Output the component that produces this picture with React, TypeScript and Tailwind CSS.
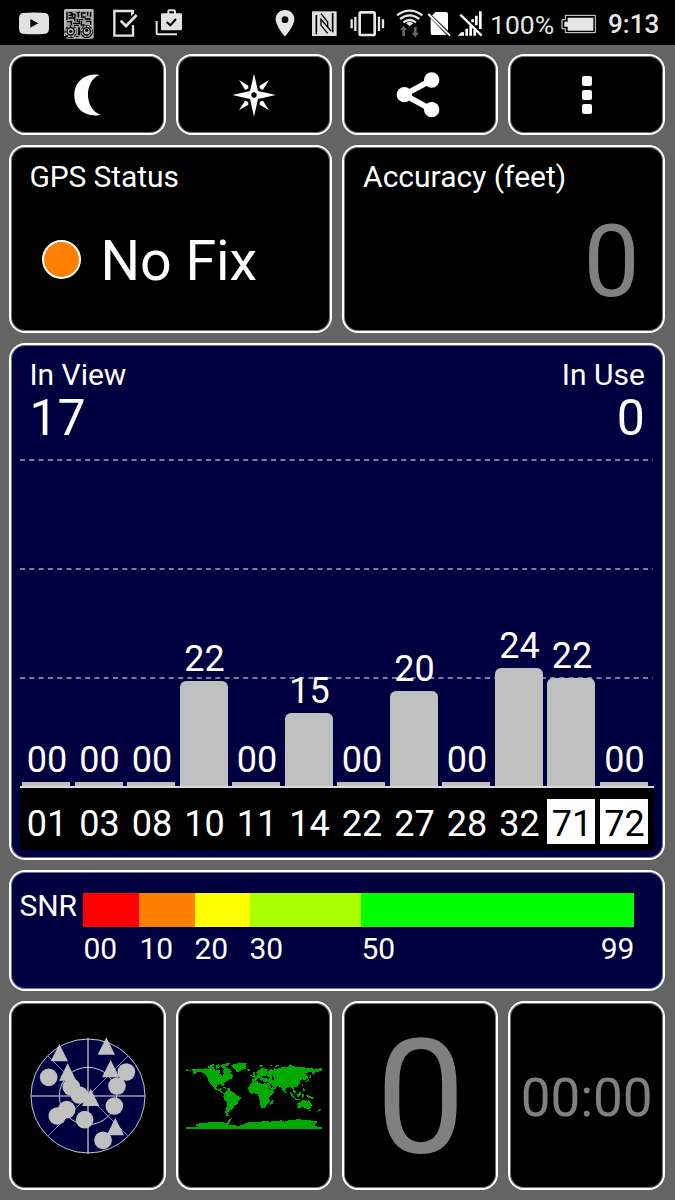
import type { JSX, ReactNode } from "react";

type Satellite = {
  prn: string;
  snr: string;
  height: number;
  glonass?: boolean;
};

const satellites: Satellite[] = [
  { prn: "01", snr: "00", height: 4 },
  { prn: "03", snr: "00", height: 4 },
  { prn: "08", snr: "00", height: 4 },
  { prn: "10", snr: "22", height: 105 },
  { prn: "11", snr: "00", height: 4 },
  { prn: "14", snr: "15", height: 73 },
  { prn: "22", snr: "00", height: 4 },
  { prn: "27", snr: "20", height: 95 },
  { prn: "28", snr: "00", height: 4 },
  { prn: "32", snr: "24", height: 118 },
  { prn: "71", snr: "22", height: 108, glonass: true },
  { prn: "72", snr: "00", height: 4, glonass: true },
];

const skyCircles = [
  [130, 246], [198, 275], [222, 299], [363, 230], [335, 272], [327, 332],
  [184, 343], [156, 362], [238, 373], [293, 435],
];

const skyTriangles = [
  [162, 146], [303, 126], [187, 204], [316, 194], [256, 280], [330, 368],
];

const Card = ({ className, children }: { className: string; children?: ReactNode }): JSX.Element => (
  <div className={`rounded-[16px] border-2 border-white shadow-[inset_0_0_0_1px_rgba(255,255,255,0.45)] ${className}`}>
    {children}
  </div>
);

const StatusBar = (): JSX.Element => (
  <header className="flex h-[45px] items-start bg-black text-[#e6e6e6]">
    {/* youtube */}
    <svg className="ml-[18px] h-[45px] w-8 shrink-0" viewBox="54 0 96 135">
      <path fill="#e2e2e2" d="M68 39Q102 36 136 39Q146 40 147 54V86Q146 100 136 101Q102 104 68 101Q58 100 57 86V54Q58 40 68 39Z" />
      <path fill="#000" d="M91 57L115 70L91 83Z" />
    </svg>
    {/* htc gears */}
    <svg className="ml-[13px] h-[45px] w-8 shrink-0" viewBox="189 0 96 135">
      <rect x="192" y="27" width="89" height="89" rx="5" fill="#bdbdbd" />
      <rect x="198" y="33" width="77" height="77" fill="#9c9c9c" />
      <g fill="none" stroke="#000" strokeWidth="4">
        <path d="M201 36V60M206 38H214V46H206M217 38V51M217 43H225V52M230 37H240M235 37V52M257 39H245V51H257M201 65H214V75M206 54H224V64M219 70H238V59H249M232 57V66M254 57H272M272 36V50M263 36V47M244 64V75H254M258 64H272V75M222 76H236" />
        <circle cx="212" cy="95" r="17" strokeWidth="4" />
        <circle cx="260" cy="95" r="17" strokeWidth="4" />
      </g>
      <g fill="none" stroke="#bdbdbd">
        <circle cx="212" cy="94" r="15" strokeWidth="6" strokeDasharray="7 4.8" />
        <circle cx="260" cy="94" r="15" strokeWidth="4" strokeDasharray="7 4.8" />
      </g>
      <g fill="#bdbdbd" stroke="#000" strokeWidth="4">
        <circle cx="212" cy="94" r="11" />
        <circle cx="260" cy="94" r="11" />
      </g>
      <g fill="#000">
        <circle cx="212" cy="94" r="5" />
        <circle cx="260" cy="91" r="5" />
        <path d="M234 82H240V106H234ZM190 108H200V116H190ZM228 108H236V112H228Z" />
      </g>
    </svg>
    {/* task check */}
    <svg className="ml-[17px] h-[45px] w-[26px] shrink-0" viewBox="336 0 78 135">
      <path fill="none" stroke="#e2e2e2" strokeWidth="7" d="M399 33H343V107H399V76" />
      <path fill="none" stroke="#e2e2e2" strokeWidth="8" d="M362 62L378 78L410 45" />
      <path fill="#e2e2e2" d="M393 30H402V40L393 49Z" />
    </svg>
    {/* play store bag */}
    <svg className="ml-[17px] h-[45px] w-7 shrink-0" viewBox="465 0 84 135">
      <path fill="none" stroke="#e2e2e2" strokeWidth="6" d="M470 63V100Q470 103 474 103H531" />
      <path fill="none" stroke="#e2e2e2" strokeWidth="6" d="M505 43V34Q505 31 508 31H521Q525 31 525 34V43" />
      <rect x="483" y="40" width="63" height="51" rx="4" fill="#e2e2e2" />
      <path fill="none" stroke="#000" strokeWidth="6" d="M500 66L511 76L528 57" />
    </svg>

    {/* location pin */}
    <svg className="ml-[92px] h-[45px] w-5 shrink-0" viewBox="135 0 60 135">
      <path fill="#e6e6e6" fillRule="evenodd" d="M165 30C149 30 137 42 137 58C137 78 165 110 165 110C165 110 193 78 193 58C193 42 181 30 165 30ZM165 49A10 10 0 1 1 165 69A10 10 0 1 1 165 49Z" />
    </svg>
    {/* nfc */}
    <svg className="ml-[16px] h-[45px] w-[26px] shrink-0" viewBox="243 0 78 135">
      <path fill="#dedede" d="M246 34H320V108H246Z" />
      <path fill="none" stroke="#000" strokeWidth="5" d="M259 103V45M308 39V97" />
      <path fill="none" stroke="#000" strokeWidth="4" d="M273 41L293 66V84M293 100L273 76V58L303 93" />
    </svg>
    {/* vibrate */}
    <svg className="ml-[12px] h-[45px] w-9 shrink-0" viewBox="358 0 108 135">
      <rect x="390" y="37" width="45" height="68" rx="4" fill="none" stroke="#e6e6e6" strokeWidth="8" />
      <path fill="none" stroke="#e6e6e6" strokeWidth="7" d="M377 50V93M366 58V85M448 50V93M460 58V85" />
    </svg>
    {/* wifi */}
    <svg className="ml-[11px] h-[45px] w-7 shrink-0" viewBox="498 0 84 135">
      <g fill="none" stroke="#e6e6e6" strokeWidth="7">
        <path d="M501 46Q539 18 577 46" />
        <path d="M510 57Q539 35 568 57" />
        <path d="M520 67Q539 53 558 67" />
      </g>
      <path fill="#e6e6e6" d="M528 70Q539 61 550 70L539 79Z" />
      <path fill="#666" d="M521 77L532 90H525V108H517V90H510ZM556 112L545 98H552V81H560V98H567Z" />
    </svg>
    {/* no sim */}
    <svg className="ml-[3px] h-[45px] w-6 shrink-0" viewBox="592 0 72 135">
      <path fill="#fff" d="M618 36H649Q655 36 655 42V92L607 46ZM603 55L651 105H608Q603 105 603 99Z" />
      <path stroke="#fff" strokeWidth="6" d="M596 42L661 107" />
    </svg>
    {/* no signal */}
    <svg className="ml-[6px] h-[45px] w-[26px] shrink-0" viewBox="681 0 78 135">
      <path fill="none" stroke="#fff" strokeWidth="8" d="M698 97V107M710 86V107M722 77V107M734 89V107M751 34V87M739 47V76M728 58V67" />
      <path fill="#fff" d="M683 107L696 95V107Z" />
      <path stroke="#fff" strokeWidth="7" d="M691 44L755 107" />
    </svg>
    <span className="ml-[7px] w-[66px] shrink-0 text-[26.5px] leading-[49px] whitespace-nowrap">100%</span>
    {/* battery */}
    <svg className="ml-[5px] h-[45px] w-9 shrink-0" viewBox="992 0 108 135">
      <path fill="none" stroke="#e6e6e6" strokeWidth="3" d="M1005 46H1095V98H1005V86H995V59H1005Z" />
      <path fill="#e6e6e6" d="M1012 53H1089V92H1012V80H1002V65H1012Z" />
    </svg>
    <span className="ml-[11px] text-[26px] leading-[49px] font-medium">9:13</span>
  </header>
);

const SkyView = (): JSX.Element => (
  <svg className="h-[120px] w-[120px]" viewBox="68 122 360 360">
    <circle cx="248" cy="302" r="171" fill="#000040" stroke="#c8c8d4" strokeWidth="3" />
    <circle cx="248" cy="302" r="86" fill="none" stroke="#c8c8d4" strokeWidth="3" />
    <path d="M128 182L368 422M368 182L128 422" stroke="#8d8da8" strokeWidth="3" />
    <path d="M76 302H420" stroke="#9a9ab2" strokeWidth="5" />
    <path d="M248 130V474" stroke="#fff" strokeWidth="3" />
    <g fill="#c0c0c0">
      {skyCircles.map(([x, y]) => (
        <circle key={`${x}-${y}`} cx={x} cy={y} r="26.5" />
      ))}
      {skyTriangles.map(([x, y]) => (
        <path key={`${x}-${y}`} d={`M${x} ${y}l26 52h-52z`} />
      ))}
    </g>
  </svg>
);

const WorldMap = (): JSX.Element => (
  <svg className="h-[70px] w-[140px]" viewBox="41 66 420 210" shapeRendering="crispEdges" fill="#00aa00">
    {/* north america */}
    <path d="M46 89H52V95H46ZM55 92H61V96H55ZM64 91L70 89H101L108 87L116 91H132L140 94L150 91V97L146 103L158 111L160 104L158 96L163 88L171 95L177 97L184 106L189 112L181 114L188 118L177 120L172 125L165 130L161 135L159 145L155 137L146 136L140 139L138 144L139 150L145 151L150 147L154 148L151 155L160 162L166 160L160 165L151 160L145 155L134 152L128 142L122 136L113 124L111 113L103 105L93 99L81 98L76 104L68 104V98L64 96Z" />
    <path d="M111 84L118 80L127 82L133 86L129 91L118 89ZM118 80L126 76H132L130 81ZM136 84L143 79L149 82L145 88L137 89ZM150 78L163 74L181 72L173 79L162 84L171 87L183 93L184 99L175 98L168 92L158 88L151 84ZM137 78L147 76L146 80H137Z" />
    {/* greenland and iceland */}
    <path d="M180 79L192 75L210 72H231L227 78L228 88L218 92L207 97L203 101L198 98L193 90L185 83ZM231 91H239V96H232Z" />
    <path d="M157 144L169 146L166 149L158 147ZM171 148H179V152H171Z" />
    {/* south america */}
    <path d="M163 161L168 155L175 153L184 156L191 161L198 169L212 175L210 182L204 187L202 195L193 201L187 210L179 215L174 221L171 228H167L165 219L168 207L171 191L162 182L159 172Z" />
    <path d="M168 227H175V230H168Z" />
    {/* europe and asia */}
    <path d="M243 111H249L248 101L252 98L255 110H261L266 105L259 103L258 98L265 94L272 88L281 87L292 91L287 97H295L300 89H309L304 94L311 92V87L317 91L326 87L333 85L343 82L352 84L354 80L361 76L366 80L382 85L399 84L415 88L438 89L455 88V94L449 97L434 99L429 108L425 105L426 99L419 98L404 104L415 114L411 120L403 123L397 121L390 124L389 135L379 144L372 144L370 150L376 158L375 166L371 161L366 150L359 144L356 143L347 148L343 159L336 153L333 144L323 142L316 143L317 149L304 156L297 146L291 134L293 129L279 129L278 124L272 126L267 117L260 119L256 127L246 128L245 120L253 118L249 114Z" />
    <path fill="#000" d="M274 112L288 109L294 113L302 117L295 119L282 118L274 118ZM305 112H309L312 124H307L304 117ZM294 130L304 139L307 145L303 146ZM302 139L312 144L308 147Z" />
    <path d="M265 78L276 77L278 82L270 83ZM314 81L326 77V80L316 85ZM298 79H305V82H298ZM240 107H244V112H240Z" />
    {/* africa */}
    <path d="M245 130L261 126L264 132L273 134L289 133L297 148L304 156L314 155L309 163L297 175L298 188L290 195L286 204L275 209L270 200L269 188L265 175L264 166L253 163L242 164L235 157L234 145Z" />
    <path d="M308 180L310 185L306 195L300 198L299 190Z" />
    {/* japan, islands and oceania */}
    <path d="M419 105L424 111L419 118H415L420 112ZM414 119L419 119L413 127L403 130V127L411 124ZM345 157L349 160L346 164ZM394 135H397V140H394ZM397 145L402 148L404 158L398 155ZM360 160L367 166L374 177L370 178L361 168ZM373 178L389 181V184L375 182ZM382 164L392 157L391 169L386 174L379 172ZM395 165H402V168L399 177H395ZM406 168L414 169L426 175L433 181L426 180L415 176Z" />
    <path d="M381 192L389 189L396 183L404 184L410 187L414 181L419 190L424 197L423 205L416 212L408 210L399 204L388 206L380 206L382 200ZM415 214H421V217H415ZM448 208L453 211L447 217L443 216ZM440 217L445 218L438 222Z" />
    {/* antarctica */}
    <path d="M48 264H84L75 257L91 252L121 250L151 249L169 252L176 246L172 243L184 238L180 248L174 255L181 259L209 260L224 254L240 248L269 248L285 246L298 248L320 246L334 244L341 248L358 243L382 241L402 242L432 246L443 248L436 254L434 260L442 263H456V269H48Z" />
  </svg>
);

const Legend = (): JSX.Element => (
  <Card className="flex h-[121px] bg-[#000040] pt-[21px] pl-[9px] text-[30px] leading-[35px]">
    <span className="-mt-[5px] -ml-px w-[64px] shrink-0">SNR</span>
    <div className="w-[551px]">
      <div className="flex h-[34px]">
        <div className="w-[56px] bg-[#ff0000]" />
        <div className="w-[56px] bg-[#ff8000]" />
        <div className="w-[55px] bg-[#ffff00]" />
        <div className="w-[111px] bg-[#aaff00]" />
        <div className="flex-1 bg-[#00ff00]" />
      </div>
      <div className="flex pt-1">
        <span className="w-[56px]">00</span>
        <span className="w-[55px]">10</span>
        <span className="w-[55px]">20</span>
        <span className="w-[112px]">30</span>
        <span>50</span>
        <span className="ml-auto">99</span>
      </div>
    </div>
  </Card>
);

const SignalChart = (): JSX.Element => (
  <Card className="relative h-[517px] bg-[#000040] px-[9px] pt-[13px]">
    <div className="flex justify-between px-[9px] text-[30px] leading-[34px]">
      <div>
        <div>In View</div>
        <div className="text-[50px] leading-[53px]">17</div>
      </div>
      <div className="text-right">
        <div>In Use</div>
        <div className="text-[50px] leading-[53px]">0</div>
      </div>
    </div>
    <svg className="absolute top-[114px] left-[9px] h-[222px] w-[633px]" viewBox="0 0 633 222">
      <path d="M0 1H633M0 110H633M0 219H633" stroke="#a6a6bd" strokeWidth="1.6" strokeDasharray="5 4.3" />
    </svg>
    <div className="relative flex h-[343px] items-end border-b-2 border-[#d8d8dc] pl-[2px]">
      {satellites.map((sat) => (
        <div key={sat.prn} className="w-[52.5px] shrink-0 pr-[4.5px] text-center">
          <div className="pl-px text-[36px] leading-[42px]">{sat.snr}</div>
          <div
            className={`mt-px bg-[#c0c0c0] ${sat.height > 4 ? "rounded-t-[6px]" : ""}`}
            style={{ height: sat.height }}
          />
        </div>
      ))}
    </div>
    <div className="flex h-[62px] items-start bg-black pt-[11px] pl-[2px]">
      {satellites.map((sat) => (
        <div key={sat.prn} className="w-[52.5px] shrink-0 pr-[4.5px] text-center text-[36px] leading-[50px]">
          <div className={`h-[45px] pl-px ${sat.glonass ? "bg-white text-black" : ""}`}>{sat.prn}</div>
        </div>
      ))}
    </div>
  </Card>
);

const App = (): JSX.Element => {
  return (
    <div className="h-[1200px] w-[675px] overflow-hidden bg-[#646464] font-['Roboto',sans-serif] text-white">
      <StatusBar />
      <main className="flex flex-col gap-[10px] pt-[9px] pr-[10.2px] pl-[9.4px]">
        <div className="grid grid-cols-4 gap-[10px]">
          <Card className="flex h-[81px] items-center justify-center bg-black">
            <svg className="h-[42px] w-[27px]" viewBox="221 221 81 126">
              <path fill="#fff" d="M297 224C272 218 222 232 222 285C222 338 274 352 300 343C251 326 251 242 297 224Z" />
            </svg>
          </Card>
          <Card className="flex h-[81px] items-center justify-center bg-black">
            <svg className="h-11 w-11" viewBox="21 22 132 132">
              <path fill="#fff" fillRule="evenodd" d="M87 24L99 76L152 88L99 100L87 153L75 100L22 88L75 76ZM87 80A8 8 0 1 0 87 96A8 8 0 1 0 87 80Z" />
              <path fill="#fff" d="M42 43L70 60Q72 71 60 72ZM132 43L104 60Q102 71 114 72ZM42 134L60 105Q72 106 70 117ZM132 134L114 105Q102 106 104 117Z" />
            </svg>
          </Card>
          <Card className="flex h-[81px] items-center justify-center bg-black">
            <svg className="mr-[4px] h-[46px] w-11" viewBox="182 95 132 138">
              <path fill="none" stroke="#fff" strokeWidth="17" d="M289 119L207 163L289 208" />
              <g fill="#fff">
                <circle cx="289" cy="119" r="23" />
                <circle cx="207" cy="163" r="23" />
                <circle cx="289" cy="208" r="23" />
              </g>
            </svg>
          </Card>
          <Card className="flex h-[81px] flex-col items-center justify-center gap-1 bg-black">
            <div className="h-[10px] w-[10px] rounded-[2px] bg-white" />
            <div className="h-[10px] w-[10px] rounded-[2px] bg-white" />
            <div className="h-[10px] w-[10px] rounded-[2px] bg-white" />
          </Card>
        </div>

        <div className="grid grid-cols-2 gap-[10px]">
          <Card className="h-[188px] bg-black px-[18px] pt-[13px]">
            <div className="text-[30px] leading-[34px] tracking-[-0.1px]">GPS Status</div>
            <div className="flex items-start pt-[46px] pl-[13px]">
              <div className="h-[39px] w-[39px] rounded-full border-2 border-white bg-[#ff8000]" />
              <div className="-mt-[11px] pl-[19px] text-[55.5px] leading-[66px]">No Fix</div>
            </div>
          </Card>
          <Card className="h-[188px] bg-black px-[19px] pt-[13px]">
            <div className="text-[30px] leading-[34px]">Accuracy (feet)</div>
            <div className="pt-[23px] pr-[4px] text-right text-[100px] leading-[90px] text-[#808080]">0</div>
          </Card>
        </div>

        <SignalChart />
        <Legend />

        <div className="grid grid-cols-4 gap-[10px]">
          <Card className="flex h-[189px] items-center justify-center bg-black">
            <SkyView />
          </Card>
          <Card className="flex h-[189px] items-center justify-center bg-black pt-px">
            <WorldMap />
          </Card>
          <Card className="flex h-[189px] items-center justify-center bg-black pt-[5px] pl-px text-[160px] leading-none text-[#808080]">
            0
          </Card>
          <Card className="flex h-[189px] items-center justify-center bg-black pt-[5px] text-[53px] leading-none text-[#808080]">
            00:00
          </Card>
        </div>
      </main>
    </div>
  );
};

export default App;
